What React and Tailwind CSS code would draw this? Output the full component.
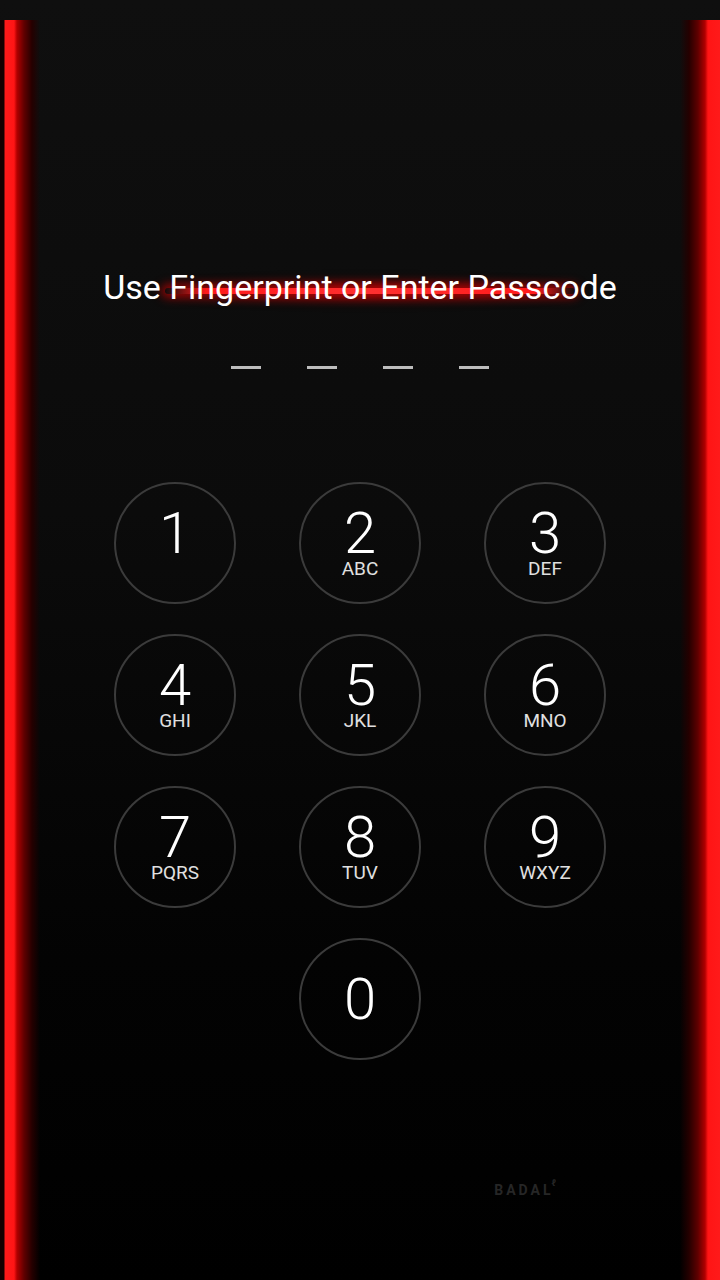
import React from 'react';

const keys = [
  { d: '1', l: '' },
  { d: '2', l: 'ABC' },
  { d: '3', l: 'DEF' },
  { d: '4', l: 'GHI' },
  { d: '5', l: 'JKL' },
  { d: '6', l: 'MNO' },
  { d: '7', l: 'PQRS' },
  { d: '8', l: 'TUV' },
  { d: '9', l: 'WXYZ' },
];

const Key = ({ d, l }) => (
  <div className="w-[122px] h-[122px] rounded-full border-2 border-[#3b3b3b] flex flex-col items-center pt-[27px]">
    <span className="block h-[44px] text-[58px] leading-[44px] font-light text-white">{d}</span>
    <span className="block mt-[4px] h-[19px] text-[19px] leading-[19px] text-[#e0e0e0]">{l || '\u00a0'}</span>
  </div>
);

export default function App() {
  return (
    <div
      className="w-[720px] h-[1280px] overflow-hidden flex bg-[linear-gradient(to_bottom,#0f0f0f_0%,#0b0b0b_40%,#030303_75%,#000_100%)]"
      style={{ fontFamily: 'Roboto, "Noto Sans", sans-serif' }}
    >
      {/* left glow strip */}
      <div className="w-[40px] mt-[20px] bg-[linear-gradient(to_right,#140000_0,#140000_4px,#ff1a1a_5px,#ff1515_14px,#b00000_17px,#600000_24px,#250000_32px,transparent_40px)]" />

      <div className="flex-1 flex flex-col items-center pt-[260px]">
        <div className="relative w-full h-[54px] flex items-center justify-center">
          <div className="absolute left-[110px] top-[18px] w-[440px] h-[26px] rounded-full bg-[radial-gradient(ellipse_at_center,rgba(230,0,0,0.6),rgba(140,0,0,0.3)_45%,transparent_72%)] blur-[5px]" />
          <div className="absolute left-[125px] top-[28px] w-[410px] h-[6px] rounded-full bg-[linear-gradient(to_right,transparent,#ff1a1a_10%,#ff3030_50%,#ff1a1a_90%,transparent)] shadow-[0_0_10px_4px_rgba(230,0,0,0.6)]" />
          <span className="relative text-[34px] text-white">
            Use Fingerprint or Enter Passcode
          </span>
        </div>

        <div className="mt-[52px] flex gap-[46px]">
          {[0, 1, 2, 3].map((i) => (
            <div key={i} className="w-[30px] h-[3px] bg-[#bdbdbd]" />
          ))}
        </div>

        <div className="mt-[113px] grid grid-cols-3 gap-x-[63px] gap-y-[30px]">
          {keys.map((k) => (
            <Key key={k.d} {...k} />
          ))}
          <div className="col-start-2 w-[122px] h-[122px] rounded-full border-2 border-[#3b3b3b] flex items-center justify-center">
            <span className="text-[58px] leading-none font-light text-white">0</span>
          </div>
        </div>

        <div className="mt-[120px] self-end mr-[124px] flex items-start text-[14px] font-bold tracking-[3px] text-[#262626]">
          BADAL
          <span className="text-[9px] tracking-normal -ml-[2px] -mt-[3px]">ℓ</span>
        </div>
      </div>

      {/* right glow strip */}
      <div className="w-[40px] mt-[20px] bg-[linear-gradient(to_left,#ff1a1a_0,#ff1515_12px,#b00000_15px,#600000_22px,#250000_31px,transparent_40px)]" />
    </div>
  );
}
